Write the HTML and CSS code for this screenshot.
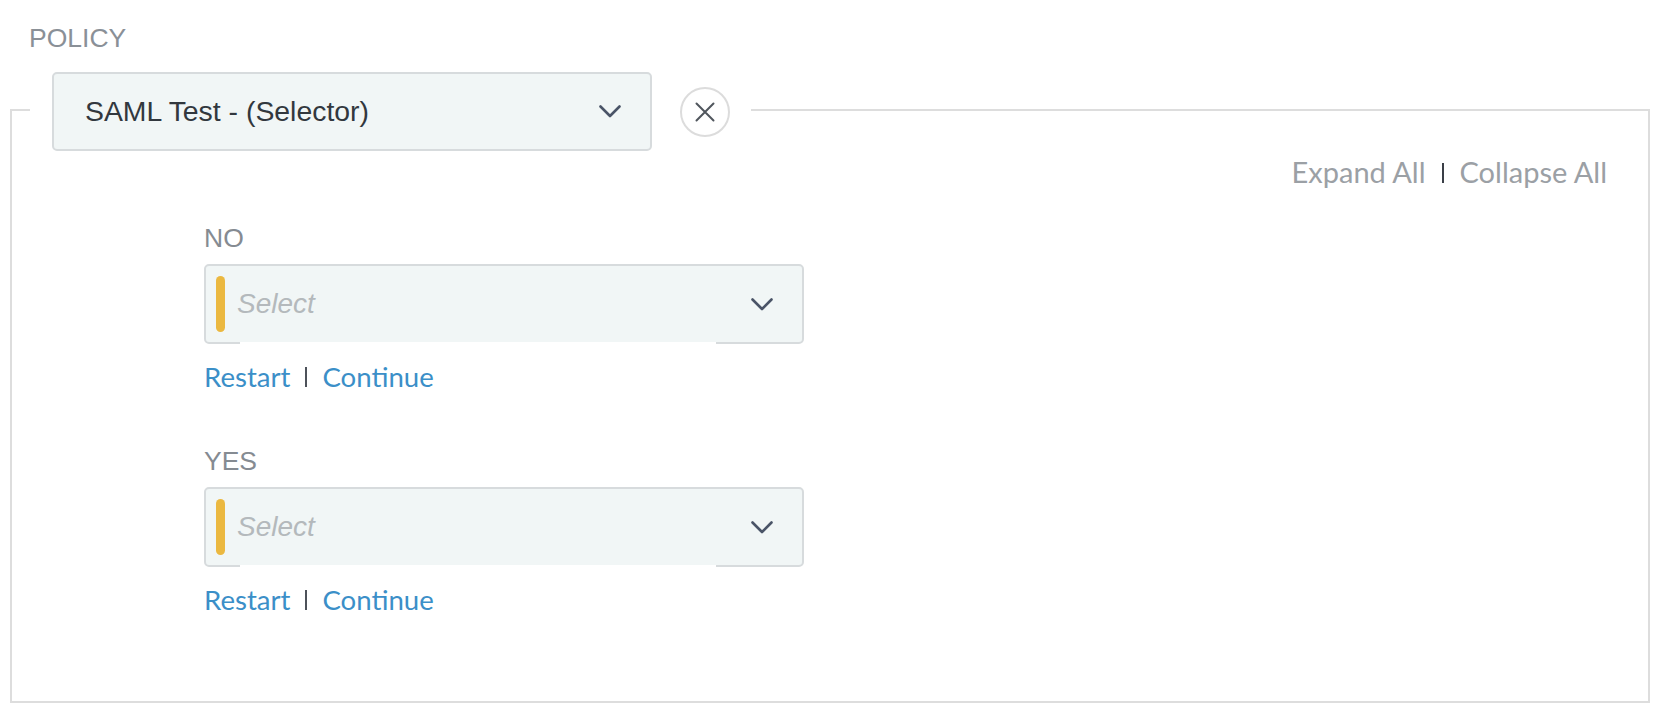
FILE: index.html
```html
<!DOCTYPE html>
<html lang="en">
<head>
<meta charset="utf-8">
<title>Policy</title>
<link rel="stylesheet" href="styles.css">
</head>
<body>
<div class="page">
  <div class="section-label">POLICY</div>
  <fieldset class="policy-box">
    <legend class="policy-legend">
      <div class="select select-main">
        <span class="select-value">SAML Test - (Selector)</span>
        <svg class="chevron" width="22" height="13" viewBox="0 0 22 13"><polyline points="1.5,1.5 11,11 20.5,1.5" fill="none" stroke="#4a5467" stroke-width="2.6" stroke-linecap="round" stroke-linejoin="round"/></svg>
      </div>
      <button class="clear-btn" type="button" aria-label="Clear">
        <svg width="20" height="20" viewBox="0 0 20 20"><path d="M1.5 1.5 L18.5 18.5 M18.5 1.5 L1.5 18.5" fill="none" stroke="#50565d" stroke-width="2" stroke-linecap="round"/></svg>
      </button>
    </legend>

    <div class="toolbar">
      <span class="tool-link">Expand All</span>
      <span class="sep sep-dark"></span>
      <span class="tool-link">Collapse All</span>
    </div>

    <div class="branch branch-first">
      <div class="branch-label">NO</div>
      <div class="select select-branch">
        <span class="flag"></span>
        <span class="placeholder">Select</span>
        <svg class="chevron" width="22" height="13" viewBox="0 0 22 13"><polyline points="1.5,1.5 11,11 20.5,1.5" fill="none" stroke="#4a5467" stroke-width="2.6" stroke-linecap="round" stroke-linejoin="round"/></svg>
      </div>
      <div class="actions">
        <span class="action-link">Restart</span>
        <span class="sep"></span>
        <span class="action-link">Continue</span>
      </div>
    </div>

    <div class="branch">
      <div class="branch-label">YES</div>
      <div class="select select-branch">
        <span class="flag"></span>
        <span class="placeholder">Select</span>
        <svg class="chevron" width="22" height="13" viewBox="0 0 22 13"><polyline points="1.5,1.5 11,11 20.5,1.5" fill="none" stroke="#4a5467" stroke-width="2.6" stroke-linecap="round" stroke-linejoin="round"/></svg>
      </div>
      <div class="actions">
        <span class="action-link">Restart</span>
        <span class="sep"></span>
        <span class="action-link">Continue</span>
      </div>
    </div>
  </fieldset>
</div>
</body>
</html>
```

FILE: styles.css
```css
* {
  box-sizing: border-box;
}

html, body {
  margin: 0;
  padding: 0;
  background: #ffffff;
}

body {
  font-family: "Liberation Sans", Arial, sans-serif;
  color: #333a40;
}

.page {
  padding-top: 23px;
}

.section-label {
  margin-left: 29px;
  font-size: 26.5px;
  line-height: 30px;
  color: #8a9097;
}

.policy-box {
  margin: 15px 29px 0 10px;
  padding: 0 0 84px 0;
  border: 2px solid #dddddd;
  min-width: 0;
}

.policy-legend {
  margin-left: 18px;
  padding: 4px 21px 0 22px;
  display: flex;
  align-items: center;
  gap: 28px;
}

.select {
  position: relative;
  display: flex;
  align-items: center;
  width: 600px;
  background: #f1f6f6;
  border: 2px solid #d7dbdd;
  border-radius: 5px;
}

.select-main {
  height: 79px;
  padding: 0 29px 0 31px;
}

.select-value {
  flex: 1;
  font-size: 28.4px;
  color: #32383e;
}

.chevron {
  flex: none;
  display: block;
}

.clear-btn {
  width: 50px;
  height: 50px;
  padding: 0;
  border: 2px solid #dcdcdc;
  border-radius: 50%;
  background: #ffffff;
  display: flex;
  align-items: center;
  justify-content: center;
}

.clear-btn svg {
  display: block;
}

.toolbar {
  margin-top: 4px;
  margin-right: 41px;
  display: flex;
  justify-content: flex-end;
  align-items: baseline;
  font-family: Lato, "Liberation Sans", sans-serif;
  font-size: 29px;
  line-height: 34px;
}

.tool-link {
  color: #9ba0a5;
}

.sep {
  display: inline-block;
  width: 2px;
  height: 20px;
  margin: 0 15px;
  background: #4d525a;
}

.toolbar .sep {
  margin: 0 16px;
}

.sep-dark {
  background: #3a3f47;
}

.branch {
  margin-left: 192px;
  margin-top: 52px;
}

.branch-first {
  margin-top: 34px;
}

.branch-label {
  font-size: 26.5px;
  line-height: 30px;
  color: #858b92;
}

.select-branch {
  margin-top: 11px;
  height: 80px;
  padding: 0 29px 0 10px;
}

.select-branch::after {
  content: "";
  position: absolute;
  left: 34px;
  right: 86px;
  bottom: -2px;
  height: 2px;
  background: #ffffff;
}

.flag {
  flex: none;
  width: 9px;
  height: 56px;
  border-radius: 5px;
  background: #ebb840;
}

.placeholder {
  flex: 1;
  margin-left: 12px;
  font-size: 28px;
  font-style: italic;
  color: #b4b9bc;
}

.actions {
  margin-top: 16px;
  display: flex;
  align-items: baseline;
  font-family: Lato, "Liberation Sans", sans-serif;
  font-size: 27.6px;
  line-height: 34px;
}

.action-link {
  color: #3b8fc8;
}
```
